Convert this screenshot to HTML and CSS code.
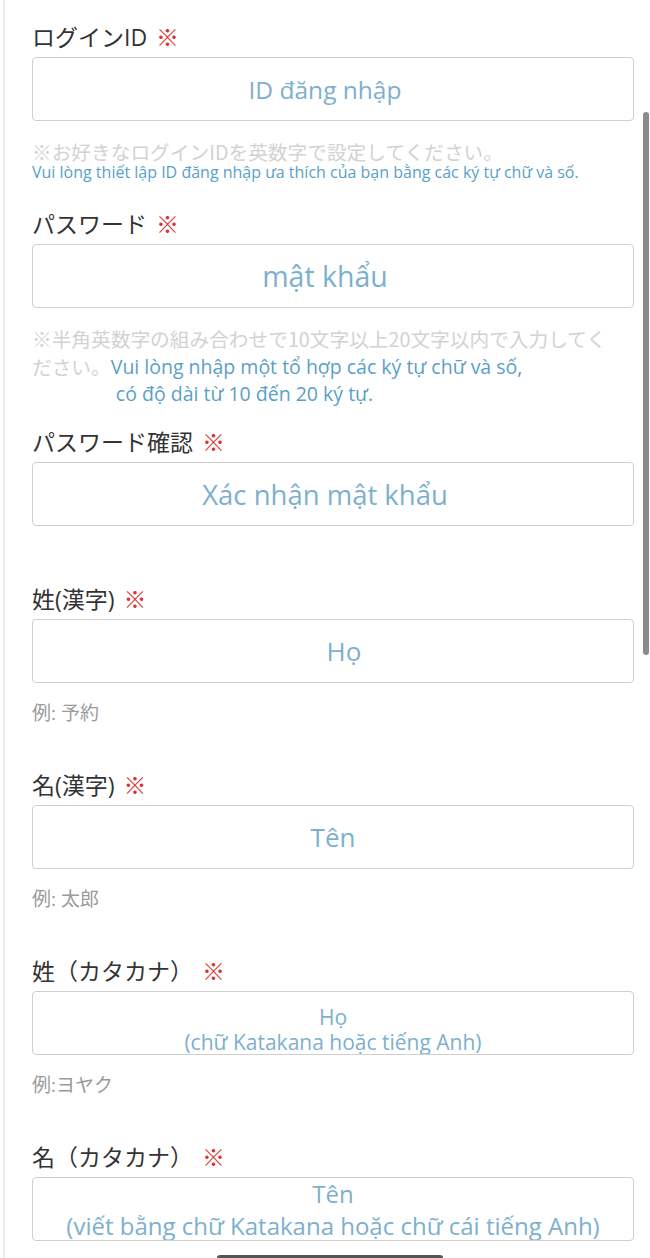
FILE: index.html
```html
<!DOCTYPE html>
<html lang="ja">

<head>
    <meta charset="UTF-8">
    <meta name="viewport" content="width=device-width, initial-scale=1.0">
    <title>会員登録</title>
    <link rel="stylesheet" href="styles.css">
</head>

<body>
    <div class="page">
        <form class="entry">
            <div class="field field-account">
                <label class="label">ログインID <span class="must">※</span></label>
                <input class="box box-id" type="text" placeholder="ID đăng nhập">
                <p class="note">※お好きなログインIDを英数字で設定してください。</p>
                <p class="note-vi">Vui lòng thiết lập ID đăng nhập ưa thích của bạn bằng các ký tự chữ và số.</p>
            </div>

            <div class="field field-password">
                <label class="label">パスワード <span class="must">※</span></label>
                <input class="box box-pass" type="password" placeholder="mật khẩu">
                <p class="note note-wrap">※半角英数字の組み合わせで10文字以上20文字以内で入力してください。<span class="note-vi note-inline">Vui lòng nhập một tổ hợp các ký tự chữ và số,<br>&nbsp;có độ dài từ 10 đến 20 ký tự.</span></p>
            </div>

            <div class="field field-confirm">
                <label class="label">パスワード確認 <span class="must">※</span></label>
                <input class="box box-confirm" type="password" placeholder="Xác nhận mật khẩu">
            </div>

            <div class="field">
                <label class="label">姓(漢字) <span class="must">※</span></label>
                <input class="box box-short" type="text" placeholder="Họ">
                <p class="example">例: 予約</p>
            </div>

            <div class="field">
                <label class="label">名(漢字) <span class="must">※</span></label>
                <input class="box" type="text" placeholder="Tên">
                <p class="example">例: 太郎</p>
            </div>

            <div class="field">
                <label class="label">姓（カタカナ） <span class="must">※</span></label>
                <textarea class="box box-two" placeholder="Họ&#10;(chữ Katakana hoặc tiếng Anh)"></textarea>
                <p class="example">例:ヨヤク</p>
            </div>

            <div class="field">
                <label class="label">名（カタカナ） <span class="must">※</span></label>
                <textarea class="box box-two box-long" placeholder="Tên&#10;(viết bằng chữ Katakana hoặc chữ cái tiếng Anh)"></textarea>
            </div>
        </form>

        <div class="scroll-thumb"></div>
        <div class="home-bar"></div>
    </div>
</body>

</html>
```

FILE: styles.css
```css
* {
    padding: 0;
    margin: 0;
    box-sizing: border-box;
}

body {
    font-family: "Open Sans", "Noto Sans CJK JP", sans-serif;
    background: #fff;
    color: #333;
}

.page {
    position: relative;
    height: 1258px;
    margin-left: 3px;
    border-left: 2px solid #ececec;
    padding: 22px 16px 0 27px;
    overflow: hidden;
}

.field {
    margin-bottom: 45px;
}

.field-account {
    margin-bottom: 28px;
}

.field-password {
    margin-bottom: 20px;
}

.field-confirm {
    margin-bottom: 58px;
}

.label {
    display: block;
    font-size: 23px;
    line-height: 30px;
    margin-bottom: 5px;
    color: #333;
}

.must {
    margin-left: 3px;
    color: #d9332e;
}

.box {
    display: block;
    width: 100%;
    height: 64px;
    padding: 0;
    border: 1px solid #cfcfcf;
    border-radius: 4px;
    background: #fff;
    font-family: "Open Sans", "Noto Sans CJK JP", sans-serif;
    font-size: 26px;
    text-align: center;
    color: #333;
    outline: none;
}

.box::placeholder {
    color: #7db0ce;
    opacity: 1;
}

/* 上の3つはプレースホルダーが少し左寄り */
.box-id,
.box-pass,
.box-confirm {
    padding-right: 16px;
}

.box-id {
    font-size: 24.5px;
}

.box-pass {
    font-size: 28.5px;
}

.box-confirm {
    font-size: 27.5px;
}

.box-short {
    padding-left: 22px;
}

.box-two {
    resize: none;
    overflow: hidden;
    font-size: 21px;
    line-height: 25px;
    padding: 13px 0 0;
}

.box-long {
    font-size: 24px;
    line-height: 32px;
    padding: 0;
}

.note {
    margin-top: 20px;
    font-size: 19.7px;
    line-height: 22px;
    color: #d2d2d2;
    font-family: "Noto Sans CJK JP", sans-serif;
}

.note-wrap {
    margin-top: 17px;
    line-height: 28px;
    max-width: 590px;
}

.note-vi {
    font-size: 16px;
    line-height: 18px;
    color: #5a9fc8;
    font-family: "Open Sans", sans-serif;
}

.note-inline {
    display: inline-block;
    vertical-align: top;
    font-size: 19.5px;
    line-height: 27px;
}

.example {
    margin-top: 18px;
    font-size: 19px;
    line-height: 24px;
    color: #9a9a9a;
}

.scroll-thumb {
    position: absolute;
    top: 112px;
    right: 1px;
    width: 6px;
    height: 543px;
    border-radius: 3px;
    background: #8a8a8a;
}

.home-bar {
    position: absolute;
    bottom: -3px;
    left: 212px;
    width: 226px;
    height: 6px;
    border-radius: 3px;
    background: #555;
}
```
